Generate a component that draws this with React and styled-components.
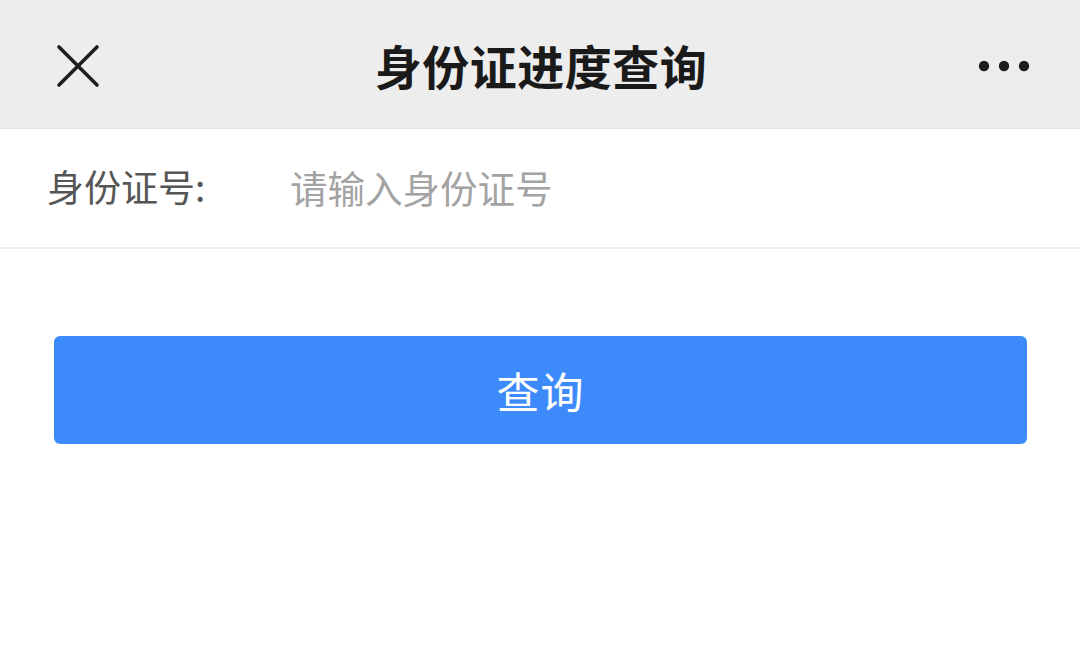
import React from "react";
import styled, { createGlobalStyle } from "styled-components";

const GlobalStyle = createGlobalStyle`
  html, body {
    margin: 0;
    padding: 0;
    background: #ffffff;
    font-family: "Noto Sans CJK SC", "Noto Sans", sans-serif;
  }
  * {
    box-sizing: border-box;
  }
`;

const App = () => {
  return (
    <Page>
      <GlobalStyle />
      <Header>
        <IconButton aria-label="close">
          <svg width="44" height="44" viewBox="0 0 44 44">
            <path
              d="M3 3 L41 41 M41 3 L3 41"
              stroke="#1e1e1e"
              strokeWidth="3.6"
              strokeLinecap="round"
            />
          </svg>
        </IconButton>
        <Title>身份证进度查询</Title>
        <IconButton aria-label="more" $right>
          <svg width="52" height="12" viewBox="0 0 52 12">
            <circle cx="6" cy="6" r="5.2" fill="#1e1e1e" />
            <circle cx="26" cy="6" r="5.2" fill="#1e1e1e" />
            <circle cx="46" cy="6" r="5.2" fill="#1e1e1e" />
          </svg>
        </IconButton>
      </Header>
      <FieldRow>
        <Label>身份证号:</Label>
        <Input placeholder="请输入身份证号" />
      </FieldRow>
      <Actions>
        <QueryButton>查询</QueryButton>
      </Actions>
    </Page>
  );
};

const Page = styled.div`
  width: 1080px;
  min-height: 662px;
  background: #ffffff;
  display: flex;
  flex-direction: column;
`;

const Header = styled.div`
  height: 129px;
  background: #ededed;
  display: flex;
  align-items: center;
  justify-content: space-between;
  padding: 0 50px 0 56px;
  border-bottom: 1px solid #e2e2e2;
`;

const IconButton = styled.div`
  width: 60px;
  display: flex;
  align-items: center;
  justify-content: ${(p) => (p.$right ? "flex-end" : "flex-start")};
  padding-top: 4px;
`;

const Title = styled.h1`
  margin: 0 0 0 -4px;
  font-size: 47px;
  font-weight: 700;
  color: #1a1a1a;
  letter-spacing: 0.5px;
`;

const FieldRow = styled.div`
  height: 120px;
  display: flex;
  align-items: center;
  padding: 0 0 0 47px;
  border-bottom: 2px solid #ededed;
`;

const Label = styled.span`
  width: 243px;
  font-size: 37px;
  color: #555555;
  padding-bottom: 4px;
`;

const Input = styled.input`
  flex: 1;
  border: none;
  outline: none;
  background: transparent;
  font-family: inherit;
  font-size: 37.5px;
  color: #333333;
  padding: 0 0 4px 0;
  &::placeholder {
    color: #a3a3a3;
  }
`;

const Actions = styled.div`
  padding: 87px 53px 0 54px;
`;

const QueryButton = styled.button`
  width: 100%;
  height: 108px;
  border: none;
  border-radius: 6px;
  background: #3d8bfb;
  color: #ffffff;
  font-family: inherit;
  font-size: 43px;
  letter-spacing: 1px;
  display: flex;
  align-items: center;
  justify-content: center;
  padding-bottom: 2px;
`;

export default App;
